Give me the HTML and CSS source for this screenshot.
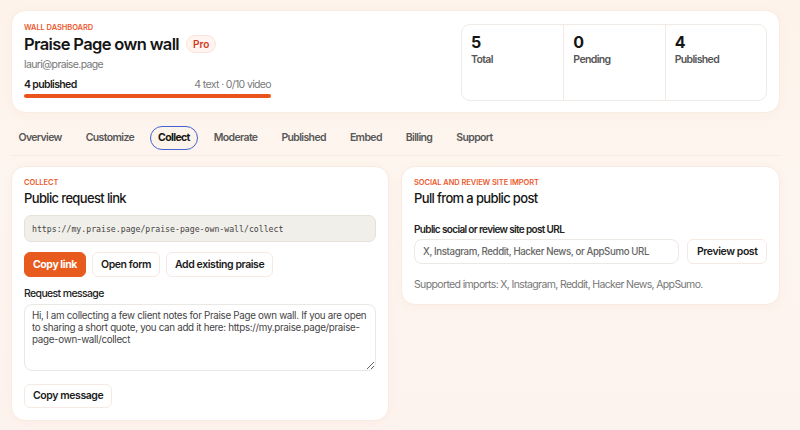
FILE: index.html
```html
<!DOCTYPE html>
<html>
<head>
<meta charset="utf-8">
<link rel="stylesheet" href="styles.css">
</head>
<body>
<div class="page">
  <section class="card hero">
    <div class="hero-main">
      <div class="eyebrow">WALL DASHBOARD</div>
      <div class="title-row">
        <h1 class="wall-title">Praise Page own wall</h1>
        <span class="badge">Pro</span>
      </div>
      <div class="email">lauri@praise.page</div>
      <div class="progress-row">
        <span class="progress-strong">4 published</span>
        <span class="progress-meta">4 text · 0/10 video</span>
      </div>
      <div class="bar"></div>
    </div>
    <div class="stats">
      <div class="stat"><div class="stat-num">5</div><div class="stat-label">Total</div></div>
      <div class="stat"><div class="stat-num">0</div><div class="stat-label">Pending</div></div>
      <div class="stat"><div class="stat-num">4</div><div class="stat-label">Published</div></div>
    </div>
  </section>

  <nav class="tabs">
    <span class="tab">Overview</span>
    <span class="tab">Customize</span>
    <span class="tab active">Collect</span>
    <span class="tab">Moderate</span>
    <span class="tab">Published</span>
    <span class="tab">Embed</span>
    <span class="tab">Billing</span>
    <span class="tab">Support</span>
  </nav>

  <div class="columns">
    <section class="card panel">
      <div class="eyebrow">COLLECT</div>
      <h2 class="panel-title">Public request link</h2>
      <div class="link-box">https://my.praise.page/praise-page-own-wall/collect</div>
      <div class="btn-row">
        <button class="btn primary">Copy link</button>
        <button class="btn">Open form</button>
        <button class="btn">Add existing praise</button>
      </div>
      <div class="field-label">Request message</div>
      <textarea class="message">Hi, I am collecting a few client notes for Praise Page own wall. If you are open to sharing a short quote, you can add it here: https://my.praise.page/praise-page-own-wall/collect</textarea>
      <div class="btn-row last">
        <button class="btn">Copy message</button>
      </div>
    </section>

    <section class="card panel right">
      <div class="eyebrow">SOCIAL AND REVIEW SITE IMPORT</div>
      <h2 class="panel-title">Pull from a public post</h2>
      <div class="field-label url-label">Public social or review site post URL</div>
      <div class="url-row">
        <input class="url-input" type="text" placeholder="X, Instagram, Reddit, Hacker News, or AppSumo URL">
        <button class="btn">Preview post</button>
      </div>
      <div class="hint">Supported imports: X, Instagram, Reddit, Hacker News, AppSumo.</div>
    </section>
  </div>
</div>
</body>
</html>
```

FILE: styles.css
```css
* { box-sizing: border-box; }
html, body { margin: 0; padding: 0; }
body {
  width: 800px;
  height: 430px;
  overflow: hidden;
  font-family: "Inter", "Open Sans", sans-serif;
  letter-spacing: -0.04em;
  color: #1b1b1b;
  background: linear-gradient(180deg, #fdf3ea 0%, #fdf5ef 45%, #fdf3ee 100%);
}
.page {
  padding: 10px 20px 0 11px;
}
.card {
  background: #ffffff;
  border: 1px solid #f8ebe2;
  border-radius: 14px;
  box-shadow: 0 2px 10px rgba(230, 140, 90, 0.06);
}
.hero {
  display: flex;
  justify-content: space-between;
  padding: 12px 12px 12px 12px;
  height: 103px;
}
.hero-main {
  width: 247px;
  display: flex;
  flex-direction: column;
}
.hero-main > * { flex-shrink: 0; }
.eyebrow {
  font-size: 7.5px;
  font-weight: 600;
  color: #ec5a2e;
  line-height: 9px;
  letter-spacing: -0.01em;
}
.title-row {
  display: flex;
  align-items: center;
  gap: 7px;
  margin-top: 1px;
}
.wall-title {
  margin: 0;
  font-size: 16.5px;
  font-weight: 600;
  line-height: 22px;
  color: #151515;
}
.badge {
  font-size: 10px;
  font-weight: 600;
  color: #d2381c;
  background: #fff4f0;
  border: 1px solid #fbe4dc;
  border-radius: 9px;
  padding: 2px 6px;
  line-height: 12px;
  letter-spacing: 0;
}
.email {
  margin-top: 3px;
  font-size: 10.5px;
  color: #777;
  line-height: 13px;
}
.progress-row {
  display: flex;
  justify-content: space-between;
  margin-top: 7px;
  font-size: 10.5px;
  line-height: 13px;
}
.progress-strong { font-weight: 600; color: #1d1d1d; }
.progress-meta { color: #7a7a7a; }
.bar {
  margin-top: 3px;
  height: 4px;
  border-radius: 2px;
  background: #e9531c;
}
.stats {
  display: grid;
  grid-template-columns: repeat(3, 1fr);
  width: 306px;
  height: 77px;
  border: 1px solid #f0ebe6;
  border-radius: 9px;
  margin-top: 1px;
}
.stat {
  padding: 8px 9px;
  border-left: 1px solid #f0ebe6;
}
.stat:first-child { border-left: none; }
.stat-num {
  font-size: 16px;
  font-weight: 700;
  line-height: 19px;
  color: #151515;
  letter-spacing: 0;
}
.stat-label {
  font-size: 10.5px;
  font-weight: 600;
  color: #555;
  line-height: 13px;
  margin-top: 1px;
}
.tabs {
  display: flex;
  align-items: center;
  margin-top: 13px;
  margin-left: -1px;
  padding-bottom: 6px;
  border-bottom: 1px solid #f5ece6;
  height: 30px;
}
.tab {
  font-size: 10.5px;
  font-weight: 600;
  color: #585858;
  padding: 5px 7.5px;
  margin-right: 7px;
  border: 1.5px solid transparent;
  border-radius: 12px;
  line-height: 12px;
}
.active {
  color: #151515;
  font-weight: 700;
  background: #fcf3ea;
  border-color: #4761cf;
}
.columns {
  display: grid;
  grid-template-columns: 378px 379px;
  gap: 12px;
  align-items: start;
  margin-top: 10px;
}
.panel {
  padding: 11px 12px 12px 12px;
  display: flex;
  flex-direction: column;
}
.panel-title {
  margin: 3px 0 0 0;
  font-size: 13px;
  font-weight: 500;
  line-height: 17px;
  color: #151515;
}
.link-box {
  margin-top: 8px;
  height: 27px;
  background: #f1efe9;
  border: 1px solid #e6e2da;
  border-radius: 7px;
  font-family: "DejaVu Sans Mono", "Liberation Mono", monospace;
  font-size: 8.2px;
  letter-spacing: 0;
  color: #444;
  padding: 0 7px;
  display: flex;
  align-items: center;
}
.btn-row {
  display: flex;
  gap: 6px;
  margin-top: 10px;
}
.btn {
  font-family: inherit;
  letter-spacing: -0.04em;
  font-size: 10.5px;
  font-weight: 600;
  color: #1b1b1b;
  background: #fff;
  border: 1px solid #f6e9e3;
  border-radius: 6px;
  height: 25px;
  padding: 0 8px;
  line-height: 12px;
}
.primary {
  background: #e85b1e;
  border-color: #e85b1e;
  color: #fff;
  font-weight: 700;
}
.field-label {
  margin-top: 10px;
  font-size: 10.5px;
  font-weight: 500;
  line-height: 13px;
  color: #222;
}
.message {
  margin-top: 4px;
  width: 100%;
  height: 67px;
  border: 1px solid #ebe7e2;
  border-radius: 8px;
  padding: 5px 3px 5px 7px;
  font-family: inherit;
  font-size: 9.8px;
  letter-spacing: -0.3px;
  line-height: 12px;
  color: #444;
  resize: vertical;
  background: #fff;
}
.btn-row.last { margin-top: 13px; }
.btn-row.last .btn { height: 24px; }
.url-label {
  margin-top: 16px;
  font-weight: 600;
  font-size: 10px;
}
.url-row {
  display: flex;
  gap: 8px;
  margin-top: 3px;
}
.url-input {
  flex: 1;
  height: 25px;
  border: 1px solid #ece8e3;
  border-radius: 8px;
  padding: 0 8px;
  font-family: inherit;
  letter-spacing: -0.04em;
  font-size: 9.7px;
  font-weight: 500;
  color: #333;
}
.url-input::placeholder { color: #666; }
.right .btn { padding: 0 8.5px; }
.hint {
  margin-top: 14px;
  font-size: 10.5px;
  color: #777;
  line-height: 13px;
  margin-bottom: 1px;
}
```
